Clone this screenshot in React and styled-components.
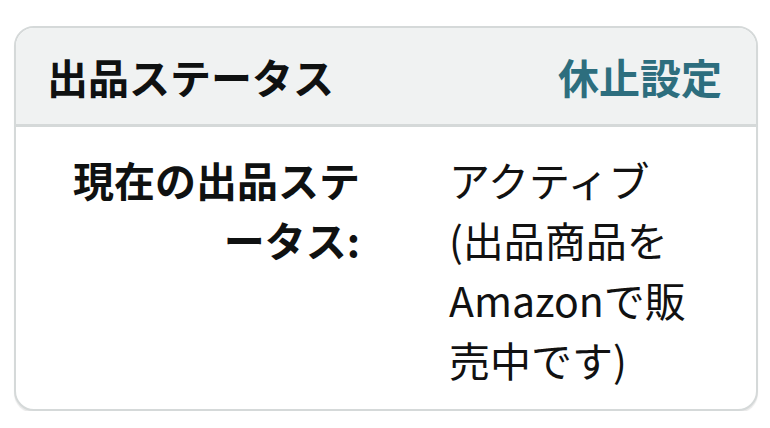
import React from "react";
import styled, { createGlobalStyle } from "styled-components";

const Global = createGlobalStyle`
  html, body { margin: 0; padding: 0; background: #ffffff; }
  body {
    font-family: "Noto Sans CJK JP", "Noto Sans", sans-serif;
    color: #0f1111;
  }
`;

const Page = styled.div`
  padding: 26px 12px 0 14px;
`;

const Card = styled.section`
  width: 740px;
  border: 2px solid #d5d9d9;
  border-radius: 20px;
  overflow: hidden;
  background: #ffffff;
  box-shadow: 0 2px 1px rgba(0, 0, 0, 0.09);
`;

const Header = styled.header`
  height: 96px;
  display: flex;
  align-items: center;
  justify-content: space-between;
  padding: 0 34px 0 31px;
  background: #f0f2f2;
  border-bottom: 3px solid #d5d9d9;
`;

const Title = styled.h2`
  margin: 0;
  font-size: 41px;
  font-weight: 700;
  line-height: 1;
  color: #0f1111;
`;

const Link = styled.a`
  font-size: 41px;
  font-weight: 700;
  line-height: 1;
  color: #2d6e7e;
  text-decoration: none;
`;

const Body = styled.dl`
  margin: 0;
  display: grid;
  grid-template-columns: 300px 262px;
  column-gap: 89px;
  padding: 22px 0 20px 44px;
  font-size: 41px;
  line-height: 60px;
  line-break: loose;
`;

const Term = styled.dt`
  margin: 0;
  font-weight: 700;
  text-align: right;
`;

const Value = styled.dd`
  margin: 0;
  font-weight: 400;
  color: #111;
`;

export default function App() {
  return (
    <>
      <Global />
      <Page lang="ja">
        <Card>
          <Header>
            <Title>出品ステータス</Title>
            <Link href="#">休止設定</Link>
          </Header>
          <Body>
            <Term>現在の出品ステータス:</Term>
            <Value>アクティブ (出品商品をAmazonで販売中です)</Value>
          </Body>
        </Card>
      </Page>
    </>
  );
}
